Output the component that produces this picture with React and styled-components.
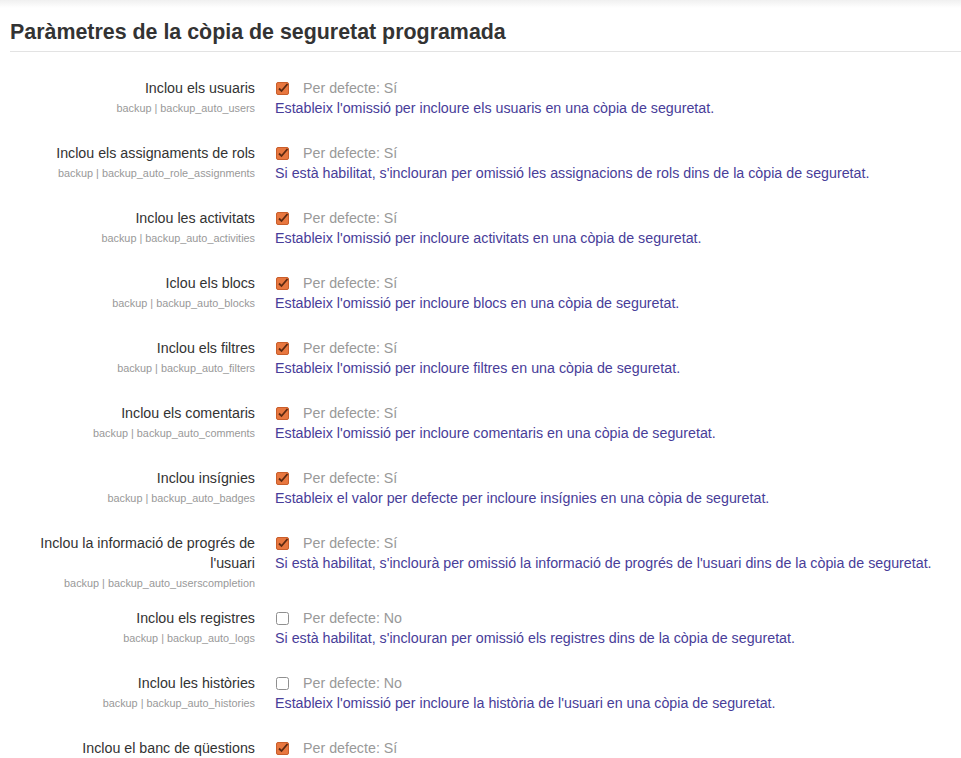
import React from "react"
import styled, { createGlobalStyle } from "styled-components"

const GlobalStyle = createGlobalStyle`
  html, body {
    margin: 0;
    padding: 0;
    background: #fff;
    font-family: "Liberation Sans", Arial, sans-serif;
  }
`

const Page = styled.div`
  padding: 0 0 0 10px;
  background: linear-gradient(to bottom, #f0f0f0 0px, #fff 8px);
`

const Heading = styled.h2`
  margin: 0;
  padding: 20px 0 7px 0;
  font-size: 21.4px;
  line-height: 24px;
  font-weight: bold;
  color: #333;
  border-bottom: 1px solid #e3e3e3;
`

const Settings = styled.div`
  padding-top: 26px;
`

const Row = styled.div`
  display: grid;
  grid-template-columns: 245px 1fr;
  column-gap: 20px;
  align-items: start;
`

const LabelCol = styled.div`
  text-align: right;
  padding-bottom: 15px;
`

const Label = styled.div`
  font-size: 14.25px;
  line-height: 20px;
  color: #333;
`

const Key = styled.div`
  font-size: 10.85px;
  line-height: 20px;
  color: #999;
`

const SettingCol = styled.div`
  padding-bottom: 25px;
`

const DefaultLine = styled.div`
  display: flex;
  align-items: center;
  height: 20px;
  gap: 14px;
  padding-left: 1px;
`

const DefaultText = styled.span`
  font-size: 14.25px;
  color: #999;
`

const Description = styled.div`
  font-size: 14.25px;
  line-height: 20px;
  color: #483d99;
`

function Checkbox({ checked }) {
  if (!checked) {
    return (
      <svg width="13" height="13" viewBox="0 0 13 13">
        <rect x="0.5" y="0.5" width="12" height="12" rx="2" fill="#fff" stroke="#8f8f8f" />
      </svg>
    )
  }
  return (
    <svg width="13" height="13" viewBox="0 0 13 13">
      <rect x="0.5" y="0.5" width="12" height="12" rx="1.5" fill="#e8773f" stroke="#c95e2b" />
      <path d="M3 6.5 L5.5 9 L11.5 2" fill="none" stroke="#5b2a12" strokeWidth="1.8" />
    </svg>
  )
}

const items = [
  {
    label: "Inclou els usuaris",
    key: "backup_auto_users",
    on: true,
    desc: "Estableix l'omissió per incloure els usuaris en una còpia de seguretat.",
  },
  {
    label: "Inclou els assignaments de rols",
    key: "backup_auto_role_assignments",
    on: true,
    desc: "Si està habilitat, s'inclouran per omissió les assignacions de rols dins de la còpia de seguretat.",
  },
  {
    label: "Inclou les activitats",
    key: "backup_auto_activities",
    on: true,
    desc: "Estableix l'omissió per incloure activitats en una còpia de seguretat.",
  },
  {
    label: "Iclou els blocs",
    key: "backup_auto_blocks",
    on: true,
    desc: "Estableix l'omissió per incloure blocs en una còpia de seguretat.",
  },
  {
    label: "Inclou els filtres",
    key: "backup_auto_filters",
    on: true,
    desc: "Estableix l'omissió per incloure filtres en una còpia de seguretat.",
  },
  {
    label: "Inclou els comentaris",
    key: "backup_auto_comments",
    on: true,
    desc: "Estableix l'omissió per incloure comentaris en una còpia de seguretat.",
  },
  {
    label: "Inclou insígnies",
    key: "backup_auto_badges",
    on: true,
    desc: "Estableix el valor per defecte per incloure insígnies en una còpia de seguretat.",
  },
  {
    label: "Inclou la informació de progrés de l'usuari",
    key: "backup_auto_userscompletion",
    on: true,
    desc: "Si està habilitat, s'inclourà per omissió la informació de progrés de l'usuari dins de la còpia de seguretat.",
  },
  {
    label: "Inclou els registres",
    key: "backup_auto_logs",
    on: false,
    desc: "Si està habilitat, s'inclouran per omissió els registres dins de la còpia de seguretat.",
  },
  {
    label: "Inclou les històries",
    key: "backup_auto_histories",
    on: false,
    desc: "Estableix l'omissió per incloure la història de l'usuari en una còpia de seguretat.",
  },
  {
    label: "Inclou el banc de qüestions",
    key: "backup_auto_questionbank",
    on: true,
    desc: "Estableix l'omissió per incloure el banc de qüestions en una còpia de seguretat.",
  },
]

export default function App() {
  return (
    <Page>
      <GlobalStyle />
      <Heading>Paràmetres de la còpia de seguretat programada</Heading>
      <Settings>
        {items.map(item => (
          <Row key={item.key}>
            <LabelCol>
              <Label>{item.label}</Label>
              <Key>backup | {item.key}</Key>
            </LabelCol>
            <SettingCol>
              <DefaultLine>
                <Checkbox checked={item.on} />
                <DefaultText>Per defecte: {item.on ? "Sí" : "No"}</DefaultText>
              </DefaultLine>
              <Description>{item.desc}</Description>
            </SettingCol>
          </Row>
        ))}
      </Settings>
    </Page>
  )
}
